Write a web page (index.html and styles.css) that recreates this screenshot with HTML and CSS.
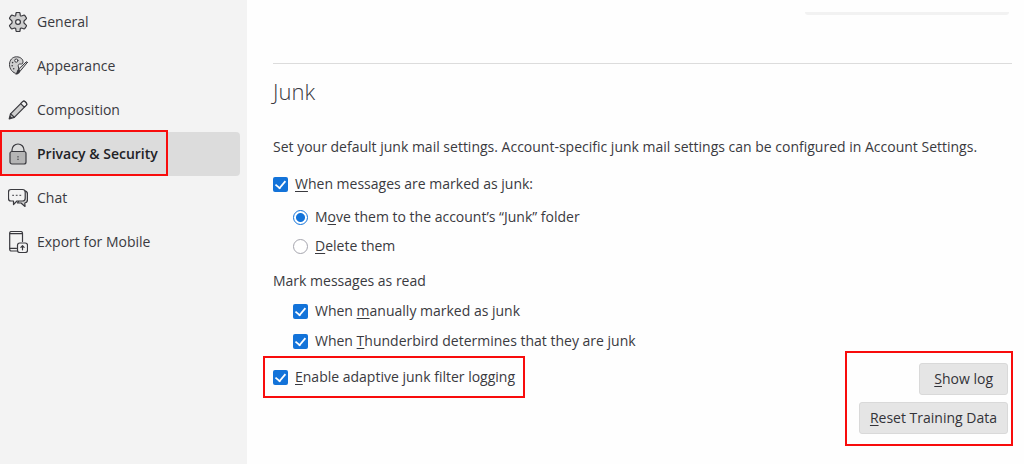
FILE: index.html
```html
<!DOCTYPE html>
<html lang="en">
<head>
    <meta charset="UTF-8">
    <meta name="viewport" content="width=device-width, initial-scale=1.0">
    <title>Settings - Privacy &amp; Security</title>
    <link rel="stylesheet" href="styles.css">
</head>
<body>
    <nav class="sidebar">
        <a class="category" href="#general">
            <svg class="icon" viewBox="0 0 20 20">
                <path class="fill" d="M8 1.200Q8.100.4 9 .4h2q.9 0 1 .800l.3 2.200q.3.700 1.100.6l2.300-.8q.8-.2 1.200.4l1.400 2.200q.4.700-.3 1.300L16.200 8.800q-.6 1.200 0 2.400l1.800 1.700q.7.600.3 1.300l-1.400 2.200q-.4.600-1.200.4l-2.300-.8q-.8-.1-1.100.6L12 18.800q-.1.800-1 .8H9q-.9 0-1-.8l-.3-2.200q-.3-.7-1.100-.6l-2.300.8q-.8.2-1.200-.4l-1.400-2.200q-.4-.7.3-1.300l1.800-1.700q.6-1.200 0-2.400L2 7.100q-.7-.6-.3-1.300l1.400-2.200q.4-.6 1.200-.4l2.300.8q.8.1 1.100-.6z"/>
                <circle class="paper" cx="10" cy="10" r="2.400"/>
            </svg>
            General
        </a>
        <a class="category" href="#appearance">
            <svg class="icon thin" viewBox="0 0 20 20">
                <path class="fill" d="M9 17.800C4.500 17 1.500 13 1.500 8.500 1.500 4 4.500.8 8.500.8c4 0 6.500 2.400 6.500 5 0 2-1 2.400-2.200 2.200-2-.3-3.200 1-2.400 3 .6 1.600 0 2.500-.6 4z"/>
                <circle class="paper" cx="8.300" cy="4.600" r="1.600"/>
                <circle class="dot" cx="4.600" cy="6.600" r=".8"/>
                <circle class="dot" cx="4.200" cy="9.800" r=".8"/>
                <circle class="dot" cx="5.700" cy="12.800" r=".8"/>
                <path class="fill" d="M19.300 6.500l-6.800 8.300-2-1.600 7.700-7.300c.6-.4 1.400.1 1.100.6z"/>
                <path class="dark" d="M10.500 13.200l2 1.600c-.5 2.300-2 3.800-5.200 3.900 1.300-1.200 1.200-4 3.200-5.500z"/>
            </svg>
            Appearance
        </a>
        <a class="category" href="#composition">
            <svg class="icon" viewBox="0 0 20 20">
                <path class="fill" d="M1.200 18.800l1.300-5L14.700 1.600c1.600-1.400 5 1.800 3.700 3.600L6.300 17.300z"/>
                <path class="paper" d="M12.700 3.600l2-2c1.600-1.400 5 1.800 3.700 3.600l-2 2z"/>
                <path class="line" d="M2.500 13.800l3.800 3.500"/>
                <path class="dark" d="M1.200 18.800l.8-3.200 2.400 2.300z"/>
            </svg>
            Composition
        </a>
        <a class="category selected" href="#privacy">
            <svg class="icon tall" viewBox="0 0 20 22">
                <path class="line" d="M4 9V7a6 6 0 0 1 12 0v2"/>
                <rect class="fill lock" x="2" y="8.500" width="16" height="12.500" rx="2"/>
                <path class="line" d="M10 13.500v.4M10 16v.4"/>
            </svg>
            Privacy &amp; Security
        </a>
        <a class="category" href="#chat">
            <svg class="icon" viewBox="0 0 20 20">
                <path class="fill" d="M16.500 2.800c2.300.2 3 1 3 3v6c0 2-.8 3-2.700 3.200l.2 3.500-4-3.500H9.500z"/>
                <path class="paper" d="M3 1.500h11.500c2 0 2.700.8 2.700 2.700v6c0 2-.7 2.800-2.700 2.800H9L5.500 16.500V13H3C1 13 .5 12.200.5 10.200v-6C.5 2.300 1 1.500 3 1.500z"/>
                <path class="line thin" d="M4.600 7.300h1M8.200 7.300h1M11.800 7.300h1"/>
            </svg>
            Chat
        </a>
        <a class="category" href="#export">
            <svg class="icon tall" viewBox="0 0 20 22">
                <path class="paper" d="M9.500 20H3.500c-1.200 0-1.800-.6-1.800-1.800V2.300C1.700 1.100 2.300.5 3.500.5h9.200c1.200 0 1.800.6 1.800 1.800V10.500"/>
                <path class="line" d="M2 2.600h12M2 17.300h6.500"/>
                <rect class="paper" x="9.500" y="12" width="10" height="9.500" rx="2.300"/>
                <path class="line" d="M14.500 18.800v-4M12.900 16.300l1.600-1.600 1.600 1.600"/>
            </svg>
            Export for Mobile
        </a>
    </nav>

    <main class="content">
        <div class="field-edge"></div>
        <section class="junk">
            <h1>Junk</h1>
            <p class="description">Set your default junk mail settings. Account-specific junk mail settings can be configured in Account Settings.</p>

            <label class="option"><input type="checkbox" checked><span><u>W</u>hen messages are marked as junk:</span></label>
            <div class="indent radios">
                <label class="option"><input type="radio" name="junk-action" checked><span>M<u>o</u>ve them to the account’s “Junk” folder</span></label>
                <label class="option"><input type="radio" name="junk-action"><span><u>D</u>elete them</span></label>
            </div>

            <p class="group-title">Mark messages as read</p>
            <div class="indent checks">
                <label class="option"><input type="checkbox" checked><span>When <u>m</u>anually marked as junk</span></label>
                <label class="option"><input type="checkbox" checked><span>When <u>T</u>hunderbird determines that they are junk</span></label>
            </div>

            <div class="logging">
                <label class="option marked"><input type="checkbox" checked><span><u>E</u>nable adaptive junk filter logging</span></label>
                <div class="actions marked">
                    <button type="button"><u>S</u>how log</button>
                    <button type="button"><u>R</u>eset Training Data</button>
                </div>
            </div>
        </section>
    </main>
</body>
</html>
```
FILE: styles.css
```css
* {
    box-sizing: border-box;
}
body {
    margin: 0;
    min-height: 100vh;
    display: flex;
    font-family: "Open Sans", sans-serif;
    font-size: 14px;
    line-height: 20px;
    color: #3a3a3f;
    background: #fefefe;
}

/* Sidebar */
.sidebar {
    flex: 0 0 247px;
    padding-right: 7px;
    background: #f3f3f3;
}
.category {
    position: relative;
    display: flex;
    align-items: center;
    gap: 9px;
    height: 44px;
    padding-left: 8px;
    border-radius: 4px;
    color: inherit;
    text-decoration: none;
}
.category.selected {
    background: #dcdcdc;
    color: #222226;
    font-weight: 600;
}
.category.selected::after {
    content: "";
    position: absolute;
    inset: -2px 72px 0 0;
    border: 2px solid #f80c0c;
}
.icon {
    width: 20px;
    height: 20px;
    fill: none;
    stroke: #3a3a3f;
    stroke-width: 1.2;
    stroke-linejoin: round;
    stroke-linecap: round;
}
.icon.tall {
    height: 22px;
}
.thin {
    stroke-width: 1;
}
.icon .fill {
    fill: #cfcfcf;
}
.icon .lock {
    fill: #b5b5b5;
}
.icon .paper {
    fill: #f3f3f3;
}
.icon .dot,
.icon .dark {
    fill: #3a3a3f;
    stroke: none;
}

/* Settings pane */
.content {
    flex: 1;
    padding: 12px 12px 0 26px;
}
.field-edge {
    width: 204px;
    height: 3px;
    margin: 0 3px 48px auto;
    background: #f2f2f2;
    border-radius: 0 0 4px 4px;
}
.junk {
    border-top: 1px solid #dcdcdc;
    padding-top: 15px;
}
h1 {
    margin: 0 0 34px;
    font-size: 22px;
    font-weight: 300;
    line-height: 24px;
}
.description {
    margin: 0 0 17px;
}
.option {
    display: flex;
    align-items: center;
    gap: 7px;
    width: fit-content;
}
.indent {
    display: flex;
    flex-direction: column;
    padding-left: 20px;
}
.radios {
    gap: 9px;
    margin: 13px 0 15px;
}
.group-title {
    margin: 0 0 10px;
}
.checks {
    gap: 10px;
    margin-bottom: 12px;
}
u {
    text-underline-offset: 2px;
}

input {
    appearance: none;
    flex: none;
    width: 15px;
    height: 15px;
    margin: 0;
}
input[type="checkbox"] {
    display: grid;
    place-items: center;
    border-radius: 2px;
    background: #1373d9;
}
input[type="checkbox"]::before {
    content: "";
    width: 9px;
    height: 5px;
    margin-bottom: 2px;
    border: solid #fff;
    border-width: 0 0 2px 2px;
    transform: rotate(-50deg) scale(0.9);
}
input[type="radio"] {
    border: 1px solid #a5a5ae;
    border-radius: 50%;
    background: #fff;
}
input[type="radio"]:checked {
    border-color: #1373d9;
    background: radial-gradient(circle, #1373d9 4px, #fff 5px);
}

.logging {
    display: flex;
    justify-content: space-between;
    align-items: flex-start;
    padding-right: 4px;
}
.logging .option {
    margin-top: 4px;
}
.actions {
    display: flex;
    flex-direction: column;
    align-items: flex-end;
    gap: 7px;
}
button {
    height: 32px;
    padding: 0 10px;
    border: 1px solid #d9d9d9;
    border-radius: 3px;
    background: #e5e5e5;
    color: #333338;
    font: inherit;
}
button:first-child {
    padding: 0 14px;
}

/* Red callout frames */
.marked {
    position: relative;
}
.marked::after {
    content: "";
    position: absolute;
    inset: -11px -10px -11px -10px;
    border: 2px solid #f80c0c;
}
.actions.marked::after {
    inset: -12px -5px -12px -14px;
}
```
